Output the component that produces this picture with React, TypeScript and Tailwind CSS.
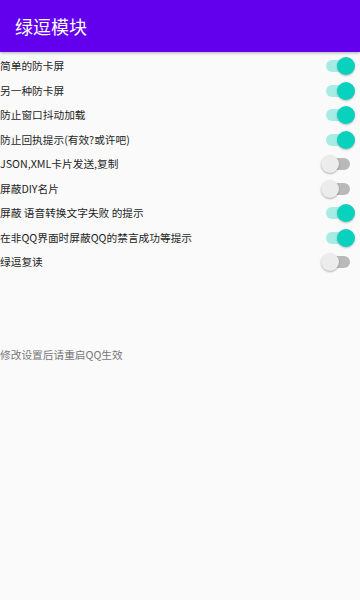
const items: { label: string; on: boolean }[] = [
  { label: "简单的防卡屏", on: true },
  { label: "另一种防卡屏", on: true },
  { label: "防止窗口抖动加载", on: true },
  { label: "防止回执提示(有效?或许吧)", on: true },
  { label: "JSON,XML卡片发送,复制", on: false },
  { label: "屏蔽DIY名片", on: false },
  { label: "屏蔽 语音转换文字失败 的提示", on: true },
  { label: "在非QQ界面时屏蔽QQ的禁言成功等提示", on: true },
  { label: "绿逗复读", on: false },
];

const Switch = ({ on }: { on: boolean }) => (
  <div className="relative w-[36px] h-[20px] flex items-center">
    <div
      className={
        on
          ? "ml-[6px] w-[24px] h-[12px] rounded-full bg-[#a6ece4]"
          : "ml-[6px] w-[24px] h-[12px] rounded-full bg-[#b9b9b9]"
      }
    />
    <div
      className={
        on
          ? "absolute left-[17px] top-[1px] w-[18px] h-[18px] rounded-full bg-[#08d2bd] shadow-[0_1px_2px_rgba(0,0,0,0.25)]"
          : "absolute left-[1px] top-[1px] w-[18px] h-[18px] rounded-full bg-[#ececec] shadow-[0_1px_2px_rgba(0,0,0,0.3)]"
      }
    />
  </div>
);

export default function App() {
  return (
    <div
      className="w-[360px] h-[600px] bg-[#fafafa] flex flex-col"
      style={{ fontFamily: '"Noto Sans CJK SC", "Noto Sans", sans-serif' }}
    >
      <div className="h-[52px] bg-[#6200ee] flex items-center pl-[15px] shadow-[0_1px_3px_rgba(0,0,0,0.3)]">
        <h1 className="text-[18px] text-white">绿逗模块</h1>
      </div>
      <ul className="pt-[2px] pr-[4px]">
        {items.map((item) => (
          <li key={item.label} className="h-[24.5px] flex items-center justify-between">
            <span className="text-[10.7px] text-[#1e1e1e]">{item.label}</span>
            <Switch on={item.on} />
          </li>
        ))}
      </ul>
      <p className="mt-[72px] text-[10.7px] text-[#777]">修改设置后请重启QQ生效</p>
    </div>
  );
}
